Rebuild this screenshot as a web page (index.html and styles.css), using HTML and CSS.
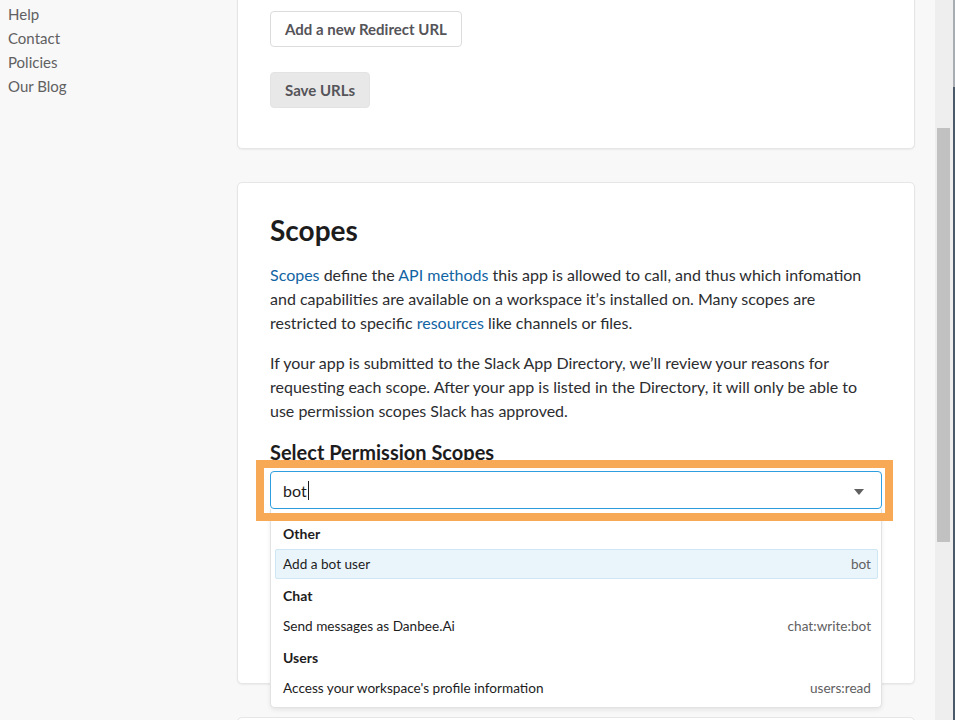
FILE: index.html
```html
<!DOCTYPE html>
<html lang="en">
<head>
<meta charset="utf-8">
<title>Scopes</title>
<link rel="stylesheet" href="styles.css">
</head>
<body>
<div class="window">
  <div class="page">
    <nav class="sidebar">
      <a href="#">Help</a>
      <a href="#">Contact</a>
      <a href="#">Policies</a>
      <a href="#">Our Blog</a>
    </nav>
    <main class="main">
      <section class="card card-urls">
        <button class="btn btn-outline">Add a new Redirect URL</button>
        <button class="btn btn-grey">Save URLs</button>
      </section>
      <section class="card card-scopes">
        <h2 class="title">Scopes</h2>
        <p class="text"><a href="#">Scopes</a> define the <a href="#">API methods</a> this app is allowed to call, and thus which infomation and capabilities are available on a workspace it’s installed on. Many scopes are restricted to specific <a href="#">resources</a> like channels or files.</p>
        <p class="text">If your app is submitted to the Slack App Directory, we’ll review your reasons for requesting each scope. After your app is listed in the Directory, it will only be able to use permission scopes Slack has approved.</p>
        <h3 class="subtitle">Select Permission Scopes</h3>
        <div class="select">
          <div class="select-input"><span class="value">bot</span><span class="caret"></span><span class="arrow"></span></div>
          <div class="highlight-box"></div>
          <div class="menu">
            <div class="group">Other</div>
            <div class="option active"><span>Add a bot user</span><span class="scope">bot</span></div>
            <div class="group">Chat</div>
            <div class="option"><span>Send messages as Danbee.Ai</span><span class="scope">chat:write:bot</span></div>
            <div class="group">Users</div>
            <div class="option"><span>Access your workspace's profile information</span><span class="scope">users:read</span></div>
          </div>
        </div>
      </section>
      <section class="card card-next"></section>
    </main>
  </div>
  <div class="scrollbar"><div class="thumb"></div></div>
  <div class="edge"></div>
</div>
</body>
</html>
```

FILE: styles.css
```css
* { box-sizing: border-box; }
html, body {
  margin: 0;
  padding: 0;
  height: 720px;
  overflow: hidden;
}
body {
  font-family: Lato, "Open Sans", sans-serif;
  color: #1d1c1d;
  background: #f8f8f8;
}
.window {
  display: flex;
  height: 720px;
}
.page {
  flex: 1;
  display: grid;
  grid-template-columns: 237px 678px;
  align-items: start;
  background: #f8f8f8;
  overflow: hidden;
}
.sidebar {
  display: flex;
  flex-direction: column;
  padding: 2px 0 0 8px;
}
.sidebar a {
  font-size: 15px;
  line-height: 24px;
  color: #616061;
  text-decoration: none;
}
.main {
  display: flex;
  flex-direction: column;
  margin-top: -22px;
}
.card {
  background: #fff;
  border: 1px solid #e6e6e6;
  border-radius: 5px;
  box-shadow: 0 1px 2px rgba(0,0,0,0.06);
  padding: 32px;
  margin-bottom: 33px;
}
.card-urls {
  display: flex;
  flex-direction: column;
  align-items: flex-start;
  gap: 25px;
  padding-bottom: 40px;
}
.btn {
  font-family: Lato, sans-serif;
  font-weight: 700;
  font-size: 15px;
  height: 36px;
  border-radius: 4px;
  color: #555459;
  padding: 0 14px;
  cursor: pointer;
}
.btn-outline {
  background: #fff;
  border: 1px solid #dcdcdc;
}
.btn-grey {
  background: #e8e8e8;
  border: 1px solid #e3e3e3;
}
.card-scopes {
  padding-top: 30px;
  height: 502px;
}
.title {
  margin: 0;
  font-size: 28px;
  line-height: 34px;
  font-weight: 700;
  color: #1d1c1d;
}
.text {
  margin: 16px 0 0;
  font-size: 16px;
  line-height: 24px;
  color: #2c2d30;
}
.text a {
  color: #1264a3;
  text-decoration: none;
}
.subtitle {
  margin: 15px 0 5px;
  font-size: 20px;
  line-height: 28px;
  font-weight: 700;
  color: #1d1c1d;
}
.select {
  position: relative;
}
.select-input {
  position: relative;
  display: flex;
  align-items: center;
  height: 38px;
  border: 1px solid #2d9ee0;
  border-radius: 4px;
  padding-left: 12px;
  font-size: 16px;
  color: #1d1c1d;
  background: #fff;
}
.caret {
  display: inline-block;
  width: 1px;
  height: 19px;
  background: #1d1c1d;
  margin-left: 1px;
}
.arrow {
  position: absolute;
  right: 17px;
  top: 17px;
  width: 0;
  height: 0;
  border-left: 5px solid transparent;
  border-right: 5px solid transparent;
  border-top: 6px solid #616061;
}
.highlight-box {
  position: absolute;
  left: -14px;
  top: -11px;
  right: -11px;
  height: 61px;
  border: 8px solid #f8a955;
  pointer-events: none;
  z-index: 2;
}
.menu {
  position: absolute;
  left: 0;
  right: 0;
  top: 38px;
  background: #fff;
  border: 1px solid #e2e2e2;
  border-top: none;
  border-radius: 0 0 5px 5px;
  box-shadow: 0 2px 4px rgba(0,0,0,0.08);
  padding: 9px 3px 3px 4px;
  z-index: 1;
}
.group {
  height: 31px;
  line-height: 31px;
  padding-left: 8px;
  font-size: 14px;
  font-weight: 700;
  color: #1d1c1d;
}
.option {
  display: flex;
  justify-content: space-between;
  align-items: center;
  height: 30px;
  margin-bottom: 1px;
  padding: 0 6px 0 7px;
  font-size: 13.6px;
  color: #1d1c1d;
  border: 1px solid transparent;
  border-radius: 2px;
}
.option.active {
  background: #eaf5fb;
  border-color: #cfe6f4;
}
.scope {
  color: #616061;
}
.card-next {
  height: 60px;
}
.scrollbar {
  width: 18px;
  background: #eeeeee;
  padding: 128px 3px 0 2px;
}
.thumb {
  height: 414px;
  background: #c1c1c1;
}
.edge {
  width: 2px;
  background: linear-gradient(#a8adb4 0, #a8adb4 87px, #4b596b 87px);
}
```
